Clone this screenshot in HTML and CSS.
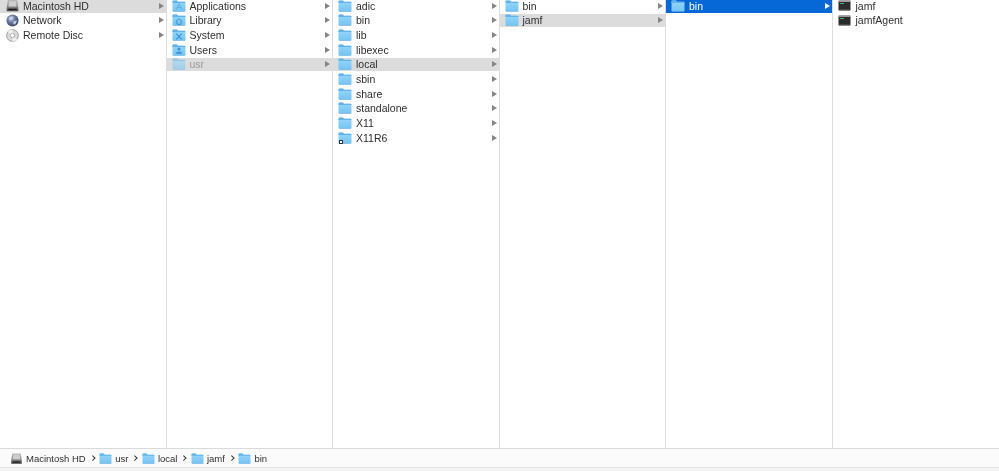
FILE: index.html
```html
<!DOCTYPE html>
<html lang="en">
<head>
<meta charset="utf-8">
<title>Finder</title>
<link rel="stylesheet" href="styles.css">
</head>
<body>
<svg class="defs" width="0" height="0" aria-hidden="true">
  <defs>
    <linearGradient id="fg" x1="0" y1="0" x2="0" y2="1"><stop offset="0" stop-color="#97d8fa"/><stop offset="1" stop-color="#74c3f3"/></linearGradient>
    <linearGradient id="hd" x1="0" y1="0" x2="0" y2="1"><stop offset="0" stop-color="#bdbdbd"/><stop offset="0.6" stop-color="#8c8c8c"/><stop offset="1" stop-color="#3e3e3e"/></linearGradient>
    <radialGradient id="gl" cx="0.4" cy="0.35" r="0.7"><stop offset="0" stop-color="#b3bdd8"/><stop offset="0.6" stop-color="#56668f"/><stop offset="1" stop-color="#39415f"/></radialGradient>
    <symbol id="folder" viewBox="0 0 14 12">
      <path d="M.5 1.5Q.5.5 1.5.5H5L6 1.8H12.5Q13.5 1.8 13.5 2.8V10.5Q13.5 11.5 12.5 11.5H1.5Q.5 11.5.5 10.5Z" fill="url(#fg)"/>
      <path d="M.5 3V1.5Q.5.5 1.5.5H5L6 1.8H12.5Q13.5 1.8 13.5 2.8V3H.5Z" fill="#62b4e8"/>
      <path d="M.5 11H13.5V10.5Q13.5 11.5 12.5 11.5H1.5Q.5 11.5.5 10.5Z" fill="#5aa9dd"/>
    </symbol>
    <symbol id="hdd" viewBox="0 0 14 13">
      <path d="M2 .5H12L13.3 9V12Q13.3 12.6 12.7 12.6H1.3Q.7 12.6.7 12V9Z" fill="url(#hd)"/>
      <rect x="2.5" y="10" width="9" height="1.3" fill="#1a1a1a"/>
      <path d="M3.3 2H10.7L11.3 7.5H2.7Z" fill="#cfcfcf"/>
    </symbol>
    <symbol id="globe" viewBox="0 0 14 14">
      <circle cx="7" cy="7" r="6.5" fill="url(#gl)"/>
      <path d="M3 4Q6 2 8 3L7 6 4 7ZM8 8L12 7 10 11 8 11Z" fill="#c7cfdf"/>
    </symbol>
    <symbol id="disc" viewBox="0 0 14 14">
      <circle cx="7" cy="7" r="6.4" fill="#d8d8d8" stroke="#8f8f8f" stroke-width=".8"/>
      <path d="M7 7 2 3A6.4 6.4 0 0 1 7 .6Z" fill="#f1f1f1"/>
      <path d="M7 7 12 11A6.4 6.4 0 0 1 7 13.4Z" fill="#eeeeee"/>
      <circle cx="7" cy="7" r="2.3" fill="#fff" stroke="#8f8f8f" stroke-width=".7"/>
    </symbol>
    <symbol id="term" viewBox="0 0 13 11">
      <rect x=".5" y=".5" width="12" height="10" rx="1" fill="#2c2c2c"/>
      <rect x=".5" y=".5" width="12" height="1.3" fill="#b5b5b5"/>
      <rect x="2" y="3" width="4" height="1" fill="#46b46a"/>
      <rect x=".5" y="9.6" width="12" height=".9" fill="#777"/>
    </symbol>
  </defs>
</svg>

<main class="browser">
  <section class="col col-first">
    <div class="row sel-grey"><svg class="ico"><use href="#hdd"/></svg><span class="name">Macintosh HD</span><i class="arrow"></i></div>
    <div class="row"><svg class="ico"><use href="#globe"/></svg><span class="name">Network</span><i class="arrow"></i></div>
    <div class="row"><svg class="ico"><use href="#disc"/></svg><span class="name">Remote Disc</span><i class="arrow"></i></div>
  </section>
  <section class="col">
    <div class="row"><span class="fi"><svg class="ico"><use href="#folder"/></svg><svg class="mark" viewBox="0 0 8 7"><path d="M1 6.5 4 .8 7 6.5M2 4.5H6" fill="none" stroke="#5aa9dd" stroke-width=".9"/></svg></span><span class="name">Applications</span><i class="arrow"></i></div>
    <div class="row"><span class="fi"><svg class="ico"><use href="#folder"/></svg><svg class="mark" viewBox="0 0 8 7"><path d="M.8 3.4 4 .8 7.2 3.4M2 3V6.3H6V3" fill="none" stroke="#3d93cf" stroke-width="1"/></svg></span><span class="name">Library</span><i class="arrow"></i></div>
    <div class="row"><span class="fi"><svg class="ico"><use href="#folder"/></svg><svg class="mark" viewBox="0 0 8 7"><path d="M1.3.6 6.7 6.4M6.7.6 1.3 6.4" fill="none" stroke="#3d93cf" stroke-width="1.1"/></svg></span><span class="name">System</span><i class="arrow"></i></div>
    <div class="row"><span class="fi"><svg class="ico"><use href="#folder"/></svg><svg class="mark" viewBox="0 0 8 7"><circle cx="4" cy="2" r="1.6" fill="#3d93cf"/><path d="M1 6.8Q1 4.4 4 4.4T7 6.8Z" fill="#3d93cf"/></svg></span><span class="name">Users</span><i class="arrow"></i></div>
    <div class="row sel-grey dim"><svg class="ico"><use href="#folder"/></svg><span class="name">usr</span><i class="arrow"></i></div>
  </section>
  <section class="col">
    <div class="row"><svg class="ico"><use href="#folder"/></svg><span class="name">adic</span><i class="arrow"></i></div>
    <div class="row"><svg class="ico"><use href="#folder"/></svg><span class="name">bin</span><i class="arrow"></i></div>
    <div class="row"><svg class="ico"><use href="#folder"/></svg><span class="name">lib</span><i class="arrow"></i></div>
    <div class="row"><svg class="ico"><use href="#folder"/></svg><span class="name">libexec</span><i class="arrow"></i></div>
    <div class="row sel-grey"><svg class="ico"><use href="#folder"/></svg><span class="name">local</span><i class="arrow"></i></div>
    <div class="row"><svg class="ico"><use href="#folder"/></svg><span class="name">sbin</span><i class="arrow"></i></div>
    <div class="row"><svg class="ico"><use href="#folder"/></svg><span class="name">share</span><i class="arrow"></i></div>
    <div class="row"><svg class="ico"><use href="#folder"/></svg><span class="name">standalone</span><i class="arrow"></i></div>
    <div class="row"><svg class="ico"><use href="#folder"/></svg><span class="name">X11</span><i class="arrow"></i></div>
    <div class="row"><span class="fi"><svg class="ico"><use href="#folder"/></svg><i class="alias"></i></span><span class="name">X11R6</span><i class="arrow"></i></div>
  </section>
  <section class="col">
    <div class="row"><svg class="ico"><use href="#folder"/></svg><span class="name">bin</span><i class="arrow"></i></div>
    <div class="row sel-grey"><svg class="ico"><use href="#folder"/></svg><span class="name">jamf</span><i class="arrow"></i></div>
  </section>
  <section class="col">
    <div class="row sel-blue"><svg class="ico"><use href="#folder"/></svg><span class="name">bin</span><i class="arrow"></i></div>
  </section>
  <section class="col col-last">
    <div class="row"><svg class="ico term"><use href="#term"/></svg><span class="name">jamf</span></div>
    <div class="row"><svg class="ico term"><use href="#term"/></svg><span class="name">jamfAgent</span></div>
  </section>
</main>

<footer class="pathbar">
  <svg class="pico"><use href="#hdd"/></svg><span>Macintosh HD</span><b class="sep"></b>
  <svg class="pico"><use href="#folder"/></svg><span>usr</span><b class="sep"></b>
  <svg class="pico"><use href="#folder"/></svg><span>local</span><b class="sep"></b>
  <svg class="pico"><use href="#folder"/></svg><span>jamf</span><b class="sep"></b>
  <svg class="pico"><use href="#folder"/></svg><span>bin</span>
</footer>
<div class="strip"></div>
</body>
</html>
```
FILE: styles.css
```css
* { box-sizing: border-box; }
html, body { margin: 0; height: 100%; }
body {
  width: 999px;
  height: 471px;
  overflow: hidden;
  background: #fff;
  display: flex;
  flex-direction: column;
  font-family: "Liberation Sans", Arial, sans-serif;
  font-size: 10.5px;
  color: #2e2e2e;
}
.defs { position: absolute; }
.browser {
  flex: 1;
  min-height: 0;
  display: grid;
  grid-template-columns: repeat(6, 166.5px);
  overflow: hidden;
  filter: blur(.3px);
}
.col {
  display: flex;
  flex-direction: column;
  gap: 1.17px;
  margin-top: -1px;
  border-right: 1px solid #dedede;
}
.col-last { border-right: 0; }
.row {
  height: 13.5px;
  flex: none;
  display: flex;
  align-items: center;
  padding-left: 5px;
}
.col-first .row { padding-left: 6px; }
.ico { width: 14px; height: 12px; flex: none; display: block; }
.col-first .ico { width: 13px; height: 13px; }
.term { width: 13px; height: 11px; }
.fi { position: relative; width: 14px; height: 12px; flex: none; }
.mark { position: absolute; left: 3px; top: 3.5px; width: 8px; height: 7px; }
.alias {
  position: absolute;
  left: 1px;
  bottom: 0;
  width: 4px;
  height: 4px;
  background: #fff;
  border: 1px solid #333;
}
.name { margin-left: 4px; flex: 1; white-space: nowrap; }
.col-first .name { margin-left: 4px; }
.col-last .name { margin-left: 5px; }
.arrow {
  width: 0;
  height: 0;
  flex: none;
  margin-right: 2px;
  border-left: 5px solid #858585;
  border-top: 3px solid transparent;
  border-bottom: 3px solid transparent;
}
.sel-grey { background: #dcdcdc; }
.sel-blue { background: #0568d6; color: #fff; }
.sel-blue .arrow { border-left-color: #fff; }
.dim .name { color: #9a9a9a; }
.dim .ico { opacity: .55; }
.pathbar {
  height: 20px;
  flex: none;
  display: flex;
  align-items: center;
  padding-left: 10px;
  background: #fbfbfb;
  border-top: 1px solid #dadada;
  border-bottom: 1px solid #e4e4e4;
  font-size: 9.5px;
  filter: blur(.3px);
}
.pico { width: 13px; height: 11px; flex: none; margin-right: 3px; }
.sep {
  width: 3.5px;
  height: 3.5px;
  margin: 0 5px;
  border-top: 1.2px solid #333;
  border-right: 1.2px solid #333;
  transform: rotate(45deg);
}
.strip { height: 3px; flex: none; background: #f2f2f2; }
```
